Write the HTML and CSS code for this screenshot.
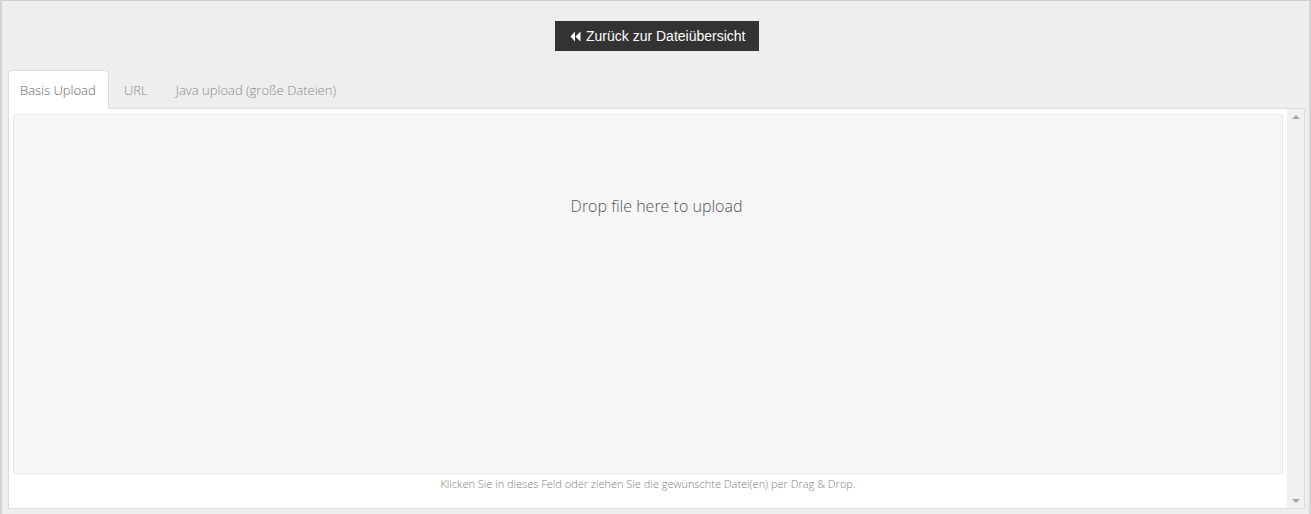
FILE: index.html
```html
<!DOCTYPE html>
<html lang="de">
<head>
<meta charset="utf-8">
<link rel="stylesheet" href="styles.css">
</head>
<body>
<div class="frame">
  <div class="top">
    <a class="back-btn" href="#"><svg class="back-icon" viewBox="0 0 11 11" width="11" height="11"><path d="M5 0.5 L0.5 5.5 L5 10.5 Z M10.5 0.5 L5.5 5.5 L10.5 10.5 Z" fill="#fff"/></svg>Zurück zur Dateiübersicht</a>
  </div>
  <div class="tabs">
    <div class="tab active">Basis Upload</div>
    <div class="tab">URL</div>
    <div class="tab">Java upload (große Dateien)</div>
  </div>
  <div class="panel">
    <div class="panel-body">
      <div class="dropzone"><span class="dz-msg">Drop file here to upload</span></div>
      <div class="hint">Klicken Sie in dieses Feld oder ziehen Sie die gewünschte Datei(en) per Drag &amp; Drop.</div>
    </div>
    <div class="scrollbar">
      <span class="arrow up"></span>
      <span class="arrow down"></span>
    </div>
  </div>
</div>
</body>
</html>
```
FILE: styles.css
```css
html, body {
  margin: 0;
  padding: 0;
  height: 514px;
  overflow: hidden;
  background: #eeeeee;
}
.frame {
  box-sizing: border-box;
  height: 514px;
  border-top: 1px solid #cfcfcf;
  border-left: 2px solid #d3d3d3;
  border-right: 2px solid #d6d6d6;
  padding: 0 4px 0 6px;
  font-family: "Open Sans", "Liberation Sans", sans-serif;
  font-weight: 300;
}
.top {
  display: flex;
  justify-content: center;
  padding-top: 20px;
  height: 69px;
  box-sizing: border-box;
}
.back-btn {
  display: flex;
  align-items: center;
  gap: 5px;
  box-sizing: border-box;
  height: 30px;
  width: 204px;
  padding-left: 15px;
  background: #333333;
  color: #ffffff;
  text-decoration: none;
  font-family: "Liberation Sans", Arial, sans-serif;
  font-weight: normal;
  font-size: 14px;
  margin-left: 1px;
}
.back-icon { flex: none; }
.tabs {
  display: flex;
  height: 39px;
  box-sizing: border-box;
  position: relative;
  z-index: 1;
}
.tab {
  box-sizing: border-box;
  height: 39px;
  padding: 10px 12px 0 12px;
  font-size: 13px;
  color: #8a8a8a;
  border: 1px solid transparent;
  border-bottom: none;
  margin-right: 2px;
  white-space: nowrap;
}
.tab.active {
  width: 101px;
  background: #ffffff;
  border-color: #dddddd;
  border-radius: 4px 4px 0 0;
  color: #666666;
  padding-left: 11px;
  padding-right: 0;
  margin-right: 2px;
}
.panel {
  display: flex;
  height: 401px;
  box-sizing: border-box;
  border: 1px solid #dddddd;
  margin-top: -1px;
  background: #ffffff;
}
.panel-body {
  flex: 1;
  display: flex;
  flex-direction: column;
  padding: 5px 4px 0 4px;
}
.dropzone {
  box-sizing: border-box;
  height: 360px;
  background: #f6f6f6;
  border: 1px solid #e8e8e8;
  border-radius: 3px;
  display: flex;
  justify-content: center;
  padding-top: 80px;
}
.dz-msg {
  font-size: 16px;
  color: #555555;
  height: 22px;
  margin-left: 17px;
}
.hint {
  text-align: center;
  font-size: 11px;
  color: #808080;
  padding-top: 2px;
}
.scrollbar {
  width: 17px;
  flex: none;
  background: #f1f1f1;
  display: flex;
  flex-direction: column;
  justify-content: space-between;
  align-items: center;
  padding: 6px 0 5px 0;
}
.arrow {
  width: 0;
  height: 0;
  border-left: 4px solid transparent;
  border-right: 4px solid transparent;
}
.arrow.up { border-bottom: 4px solid #a3a3a3; }
.arrow.down { border-top: 4px solid #a3a3a3; }
```
